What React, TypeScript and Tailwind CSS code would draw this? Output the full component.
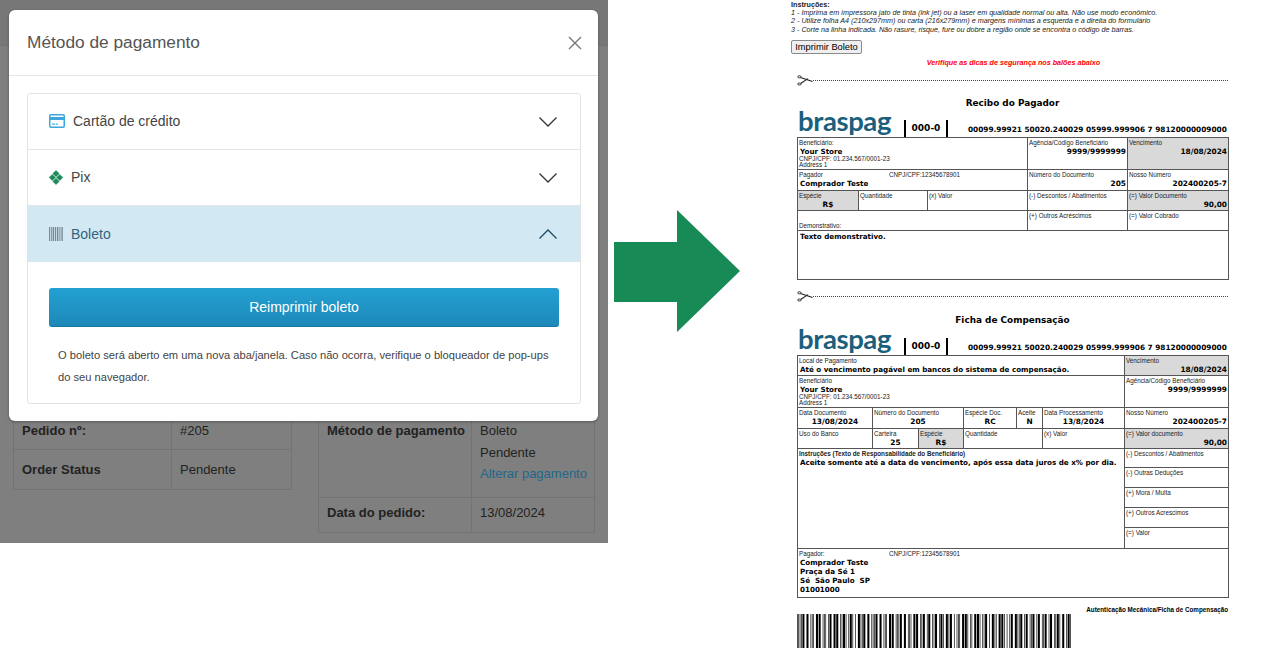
import React from "react";

const BARCODE_DIGITS = "00097981200000090009999250020240020599999990";
const PATTERNS = ["nnwwn", "wnnnw", "nwnnw", "wwnnn", "nnwnw", "wnwnn", "nwwnn", "nnnww", "wnnwn", "nwnwn"];

// interleaved 2 of 5, the one boletos use
const buildBars = (digits: string) => {
    const widths: number[] = [1, 1, 1, 1];
    for (let i = 0; i < digits.length; i += 2) {
        const a = PATTERNS[Number(digits[i])];
        const b = PATTERNS[Number(digits[i + 1])];
        for (let j = 0; j < 5; j++) {
            widths.push(a[j] === "w" ? 3 : 1, b[j] === "w" ? 3 : 1);
        }
    }
    widths.push(3, 1, 1);
    return widths;
};

const Barcode = () => {
    const widths = buildBars(BARCODE_DIGITS);
    const total = widths.reduce((sum, w) => sum + w, 0);
    let x = 0;
    return (
        <svg width="274" height="34" viewBox={`0 0 ${total} 34`} preserveAspectRatio="none" className="block">
            {widths.map((w, i) => {
                const bar = i % 2 === 0 ? <rect key={i} x={x} y={0} width={w} height={34} fill="#000" /> : null;
                x += w;
                return bar;
            })}
        </svg>
    );
};

const Chevron = ({ up, color }: { up?: boolean; color: string }) => (
    <svg width="18" height="10" viewBox="0 0 18 10" fill="none" stroke={color} strokeWidth="1.3">
        <polyline points={up ? "0.5,9.5 9,1 17.5,9.5" : "0.5,0.5 9,9 17.5,0.5"} />
    </svg>
);

const CardIcon = () => (
    <svg width="16" height="14" viewBox="0 0 16 14" className="mr-2 -mt-[2px]">
        <rect x="0.75" y="0.75" width="14.5" height="12.5" rx="1.2" fill="none" stroke="#3ba7dc" strokeWidth="1.5" />
        <rect x="1" y="3" width="14" height="3" fill="#3ba7dc" />
        <rect x="3" y="9.5" width="3" height="1.2" fill="#3ba7dc" />
        <rect x="6.8" y="9.5" width="2" height="1.2" fill="#3ba7dc" />
    </svg>
);

const PixIcon = () => (
    <svg width="14" height="15" viewBox="0 0 14 15" fill="#1b8a5a" stroke="#1b8a5a" strokeWidth="0.5" strokeLinejoin="round" className="mr-2">
        <path d="M7 0.5 L10.2 3.6 L7 6.7 L3.8 3.6 Z" />
        <path d="M7 8.3 L10.2 11.4 L7 14.5 L3.8 11.4 Z" />
        <path d="M3.3 4.4 L6.4 7.5 L3.3 10.6 L0.2 7.5 Z" />
        <path d="M10.7 4.4 L13.8 7.5 L10.7 10.6 L7.6 7.5 Z" />
    </svg>
);

const BarsIcon = () => (
    <svg width="14" height="14" viewBox="0 0 14 14" fill="#7b8a91" className="mr-2">
        <rect x="0" width="1" height="14" />
        <rect x="1.8" width="1" height="14" />
        <rect x="3.6" width="1.6" height="14" />
        <rect x="6" width="1" height="14" />
        <rect x="7.8" width="1.6" height="14" />
        <rect x="10.4" width="1" height="14" />
        <rect x="12.4" width="1.4" height="14" />
    </svg>
);

const Scissors = () => (
    <svg width="16" height="11" viewBox="0 0 16 11" fill="none" stroke="#222" strokeWidth="0.9" className="shrink-0">
        <ellipse cx="2.4" cy="1.8" rx="1.6" ry="1.1" />
        <ellipse cx="2.4" cy="9" rx="1.8" ry="1" />
        <path d="M3.6 2.6 L15.5 6.6" strokeWidth="1.1" />
        <path d="M4 8.3 L11 3.6" strokeWidth="1.1" />
    </svg>
);

const CutLine = () => (
    <div className="flex items-center">
        <Scissors />
        <div className="flex-1 border-t border-dotted border-[#444]" />
    </div>
);

const Logo = () => (
    <div className="h-[28px] w-[107px] pl-px font-['Lato',sans-serif] text-[27.5px] leading-[24px] font-bold tracking-[-0.4px] text-[#1b5f7d]">
        braspag
    </div>
);

const BankHeader = () => (
    <div className="flex items-end font-['DejaVu_Sans',sans-serif] font-bold text-black">
        <Logo />
        <div className="flex h-[17px] w-[44px] items-center justify-center border-x-2 border-black text-[9px]">000-0</div>
        <div className="ml-[20px] pb-[3px] text-[7.35px] leading-[9px] whitespace-nowrap">
            00099.99921 50020.240029 05999.999906 7 98120000009000
        </div>
    </div>
);

const Label = ({ children }: { children: React.ReactNode }) => (
    <div className="font-['Liberation_Sans',sans-serif] text-[6.3px] leading-[8px] whitespace-nowrap text-[#222]">{children}</div>
);

const Value = ({ children, align = "right" }: { children: React.ReactNode; align?: "right" | "center" | "left" }) => (
    <div
        className={`font-['DejaVu_Sans',sans-serif] leading-[9px] font-bold whitespace-nowrap text-black ${
            align === "right" ? "text-right text-[7.4px]" : align === "center" ? "text-center text-[7.4px]" : "pl-[1px] text-left text-[7.15px]"
        }`}
    >
        {children}
    </div>
);

const Small = ({ children }: { children: React.ReactNode }) => (
    <div className="font-['Liberation_Sans',sans-serif] text-[6.3px] leading-[6.5px] whitespace-nowrap text-[#222]">{children}</div>
);

const tdBase = "border border-[#555] align-top px-px pt-px pb-0 overflow-hidden";
const tdGrey = "border border-[#555] align-top px-px pt-px pb-0 overflow-hidden bg-[#d9d9d9]";

const ReciboTable = () => (
    <table className="w-[431px] table-fixed border-collapse">
        <colgroup>
            <col className="w-[61px]" />
            <col className="w-[69px]" />
            <col className="w-[100px]" />
            <col className="w-[100px]" />
            <col className="w-[101px]" />
        </colgroup>
        <tbody>
            <tr className="h-[31px]">
                <td colSpan={3} className={tdBase}>
                    <Label>Beneficiário:</Label>
                    <Value align="left">Your Store</Value>
                    <Small>CNPJ/CPF: 01.234.567/0001-23</Small>
                    <Small>Address 1</Small>
                </td>
                <td className={tdBase}>
                    <Label>Agência/Código Beneficiário</Label>
                    <Value>9999/9999999</Value>
                </td>
                <td className={tdGrey}>
                    <Label>Vencimento</Label>
                    <Value>18/08/2024</Value>
                </td>
            </tr>
            <tr className="h-[21px]">
                <td colSpan={3} className={tdBase}>
                    <div className="flex">
                        <div className="w-[90px]"><Label>Pagador</Label></div>
                        <Label>CNPJ/CPF:12345678901</Label>
                    </div>
                    <Value align="left">Comprador Teste</Value>
                </td>
                <td className={tdBase}>
                    <Label>Número do Documento</Label>
                    <Value>205</Value>
                </td>
                <td className={tdBase}>
                    <Label>Nosso Número</Label>
                    <Value>202400205-7</Value>
                </td>
            </tr>
            <tr className="h-[20px]">
                <td className={tdGrey}>
                    <Label>Espécie</Label>
                    <Value align="center">R$</Value>
                </td>
                <td className={tdBase}><Label>Quantidade</Label></td>
                <td className={tdBase}><Label>(x) Valor</Label></td>
                <td className={tdBase}><Label>(-) Descontos / Abatimentos</Label></td>
                <td className={tdGrey}>
                    <Label>(=) Valor Documento</Label>
                    <Value>90,00</Value>
                </td>
            </tr>
            <tr className="h-[20px]">
                <td colSpan={3} className={`${tdBase} !align-bottom`}><Label>Demonstrativo:</Label></td>
                <td className={tdBase}><Label>(+) Outros Acréscimos</Label></td>
                <td className={tdBase}><Label>(=) Valor Cobrado</Label></td>
            </tr>
            <tr className="h-[49px]">
                <td colSpan={5} className={tdBase}>
                    <Value align="left">Texto demonstrativo.</Value>
                </td>
            </tr>
        </tbody>
    </table>
);

const FichaTable = () => (
    <table className="w-[431px] table-fixed border-collapse">
        <colgroup>
            <col className="w-[75px]" />
            <col className="w-[46px]" />
            <col className="w-[45px]" />
            <col className="w-[53px]" />
            <col className="w-[26px]" />
            <col className="w-[82px]" />
            <col className="w-[104px]" />
        </colgroup>
        <tbody>
            <tr className="h-[20px]">
                <td colSpan={6} className={tdBase}>
                    <Label>Local de Pagamento</Label>
                    <Value align="left">Até o vencimento pagável em bancos do sistema de compensação.</Value>
                </td>
                <td className={tdGrey}>
                    <Label>Vencimento</Label>
                    <Value>18/08/2024</Value>
                </td>
            </tr>
            <tr className="h-[32px]">
                <td colSpan={6} className={tdBase}>
                    <Label>Beneficiário</Label>
                    <Value align="left">Your Store</Value>
                    <Small>CNPJ/CPF: 01.234.567/0001-23</Small>
                    <Small>Address 1</Small>
                </td>
                <td className={tdBase}>
                    <Label>Agência/Código Beneficiário</Label>
                    <Value>9999/9999999</Value>
                </td>
            </tr>
            <tr className="h-[21px]">
                <td className={tdBase}>
                    <Label>Data Documento</Label>
                    <Value align="center">13/08/2024</Value>
                </td>
                <td colSpan={2} className={tdBase}>
                    <Label>Número do Documento</Label>
                    <Value align="center">205</Value>
                </td>
                <td className={tdBase}>
                    <Label>Espécie Doc.</Label>
                    <Value align="center">RC</Value>
                </td>
                <td className={tdBase}>
                    <Label>Aceite</Label>
                    <Value align="center">N</Value>
                </td>
                <td className={tdBase}>
                    <Label>Data Processamento</Label>
                    <Value align="center">13/8/2024</Value>
                </td>
                <td className={tdBase}>
                    <Label>Nosso Número</Label>
                    <Value>202400205-7</Value>
                </td>
            </tr>
            <tr className="h-[20px]">
                <td className={tdBase}><Label>Uso do Banco</Label></td>
                <td className={tdBase}>
                    <Label>Carteira</Label>
                    <Value align="center">25</Value>
                </td>
                <td className={tdGrey}>
                    <Label>Espécie</Label>
                    <Value align="center">R$</Value>
                </td>
                <td colSpan={2} className={tdBase}><Label>Quantidade</Label></td>
                <td className={tdBase}><Label>(x) Valor</Label></td>
                <td className={tdGrey}>
                    <Label>(=) Valor documento</Label>
                    <Value>90,00</Value>
                </td>
            </tr>
            <tr className="h-[19px]">
                <td colSpan={6} rowSpan={5} className={tdBase}>
                    <Label>
                        <span className="font-bold">Instruções (Texto de Responsabilidade do Beneficiário)</span>
                    </Label>
                    <Value align="left">Aceite somente até a data de vencimento, após essa data juros de x% por dia.</Value>
                </td>
                <td className={tdBase}><Label>(-) Descontos / Abatimentos</Label></td>
            </tr>
            <tr className="h-[20px]"><td className={tdBase}><Label>(-) Outras Deduções</Label></td></tr>
            <tr className="h-[20px]"><td className={tdBase}><Label>(+) Mora / Multa</Label></td></tr>
            <tr className="h-[20px]"><td className={tdBase}><Label>(+) Outros Acrescimos</Label></td></tr>
            <tr className="h-[21px]"><td className={tdBase}><Label>(=) Valor</Label></td></tr>
            <tr className="h-[49px]">
                <td colSpan={7} className={tdBase}>
                    <div className="flex">
                        <div className="w-[90px]"><Label>Pagador:</Label></div>
                        <Label>CNPJ/CPF:12345678901</Label>
                    </div>
                    <Value align="left">Comprador Teste</Value>
                    <Value align="left">Praça da Sé 1</Value>
                    <Value align="left">Sé&nbsp; São Paulo&nbsp; SP</Value>
                    <Value align="left">01001000</Value>
                </td>
            </tr>
        </tbody>
    </table>
);

const BoletoDoc = () => (
    <div className="ml-[51px] w-[437px] shrink-0 pt-px">
        <div className="font-['Liberation_Sans',sans-serif] text-[7.2px] leading-[8.2px] text-[#222]">
            <div className="font-bold">Instruções:</div>
            <div className="italic">1 - Imprima em impressora jato de tinta (ink jet) ou a laser em qualidade normal ou alta. Não use modo econômico.</div>
            <div className="italic">2 - Utilize folha A4 (210x297mm) ou carta (216x279mm) e margens mínimas a esquerda e a direita do formulário</div>
            <div className="italic">3 - Corte na linha indicada. Não rasure, risque, fure ou dobre a região onde se encontra o código de barras.</div>
        </div>
        <button className="mt-[6px] block h-[14px] w-[71px] rounded-[2px] border border-[#8a8a8a] bg-[#efefef] font-['Liberation_Sans',sans-serif] text-[9.3px] leading-[12px] text-black">
            Imprimir Boleto
        </button>
        <div className="mt-[4px] pl-[8px] text-center font-['Liberation_Sans',sans-serif] text-[7.2px] leading-[10px] font-bold italic text-[#f00]">
            Verifique as dicas de segurança nos balões abaixo
        </div>
        <div className="mt-[7px] ml-[6px] w-[431px]">
            <CutLine />
            <div className="mt-[11px] text-center font-['DejaVu_Sans',sans-serif] text-[8.9px] leading-[12px] font-bold text-black">Recibo do Pagador</div>
            <BankHeader />
            <ReciboTable />
            <div className="mt-[11px]"><CutLine /></div>
            <div className="mt-[12px] mb-[1px] text-center font-['DejaVu_Sans',sans-serif] text-[8.9px] leading-[12px] font-bold text-black">Ficha de Compensação</div>
            <BankHeader />
            <FichaTable />
            <div className="mt-[8px] text-right font-['Liberation_Sans',sans-serif] text-[6.3px] leading-[7px] font-bold text-black">Autenticação Mecânica/Ficha de Compensação</div>
            <div className="mt-[1px]"><Barcode /></div>
        </div>
    </div>
);

const AccordionRow = ({ icon, label, up }: { icon: React.ReactNode; label: string; up?: boolean }) => (
    <div className={`flex h-[56px] items-center pr-[23px] pl-[21px] text-[14px] ${up ? "bg-[#d2e9f4] text-[#33637c]" : "border-b border-[#e5e5e5] text-[#444]"}`}>
        {icon}
        <span className="flex-1">{label}</span>
        <Chevron up={up} color={up ? "#1f4a60" : "#333"} />
    </div>
);

const PaymentModal = () => (
    <div className="absolute top-[10px] left-[9px] h-[411px] w-[589px] rounded-[6px] bg-white shadow-[0_1px_3px_rgba(0,0,0,0.3)]">
        <div className="flex h-[66px] items-center justify-between border-b border-[#e5e5e5] pr-[16px] pl-[18px]">
            <h4 className="text-[17.3px] text-[#555]">Método de pagamento</h4>
            <svg width="14" height="14" viewBox="0 0 14 14" stroke="#777" strokeWidth="1.4">
                <path d="M1 1 L13 13 M13 1 L1 13" />
            </svg>
        </div>
        <div className="mt-[17px] mr-[17px] ml-[18px] h-[311px] rounded-[3px] border border-[#e3e3e3]">
            <AccordionRow icon={<CardIcon />} label="Cartão de crédito" />
            <AccordionRow icon={<PixIcon />} label="Pix" />
            <AccordionRow icon={<BarsIcon />} label="Boleto" up />
            <div className="px-[21px] pt-[26px]">
                <button className="h-[39px] w-full rounded-[3px] border-b border-[#15769f] bg-gradient-to-b from-[#23a1d2] to-[#1c88b8] text-[14px] text-white">
                    Reimprimir boleto
                </button>
                <p className="mt-[17px] pl-[9px] text-[11.15px] leading-[22px] text-[#444]">
                    O boleto será aberto em uma nova aba/janela. Caso não ocorra, verifique o bloqueador de pop-ups
                    <br />
                    do seu navegador.
                </p>
            </div>
        </div>
    </div>
);

const cellClass = "border border-[#737373] px-[8px] align-top text-[13px] leading-[21.5px] text-[#222]";

const OrderPage = () => (
    <div className="relative h-[543px] w-[608px] shrink-0 overflow-hidden bg-[#7f7f7f] font-['Liberation_Sans',sans-serif]">
        <div className="h-[46px] border-b border-[#737373] bg-[#777]" />
        <div className="mt-[363px] flex items-start pl-[13px]">
            <table className="w-[279px] table-fixed border-collapse">
                <colgroup>
                    <col className="w-[158px]" />
                    <col />
                </colgroup>
                <tbody>
                    <tr className="h-[40px]">
                        <td className={`${cellClass} pt-[10px] font-bold text-[#111]`}>Pedido nº:</td>
                        <td className={`${cellClass} pt-[10px]`}>#205</td>
                    </tr>
                    <tr className="h-[40px]">
                        <td className={`${cellClass} pt-[9px] font-bold text-[#111]`}>Order Status</td>
                        <td className={`${cellClass} pt-[9px]`}>Pendente</td>
                    </tr>
                </tbody>
            </table>
            <table className="ml-[26px] w-[277px] table-fixed border-collapse">
                <colgroup>
                    <col className="w-[153px]" />
                    <col />
                </colgroup>
                <tbody>
                    <tr className="h-[88px]">
                        <td className={`${cellClass} pt-[10px] font-bold whitespace-nowrap text-[#111]`}>Método de pagamento</td>
                        <td className={`${cellClass} pt-[10px]`}>
                            Boleto
                            <br />
                            Pendente
                            <br />
                            <span className="whitespace-nowrap text-[#22688a]">Alterar pagamento</span>
                        </td>
                    </tr>
                    <tr className="h-[35px]">
                        <td className={`${cellClass} pt-[4px] font-bold text-[#111]`}>Data do pedido:</td>
                        <td className={`${cellClass} pt-[4px]`}>13/08/2024</td>
                    </tr>
                </tbody>
            </table>
        </div>
        <PaymentModal />
    </div>
);

const App: React.FC = () => {
    return (
        <div className="flex h-[661px] w-[1280px] items-start overflow-hidden bg-white">
            <OrderPage />
            <svg width="126" height="122" viewBox="0 0 126 122" className="mt-[210px] ml-[6px] shrink-0">
                <polygon points="0,32 63,32 63,0 126,61 63,122 63,92 0,92" fill="#188a56" />
            </svg>
            <BoletoDoc />
        </div>
    );
};

export default App;
